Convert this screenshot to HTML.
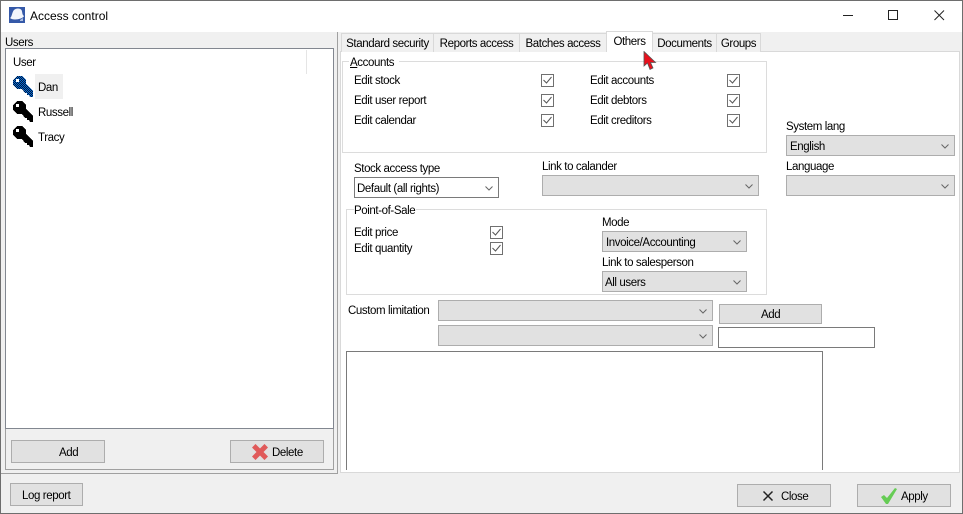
<!DOCTYPE html>
<html><head><meta charset="utf-8"><style>
html,body{margin:0;padding:0;width:963px;height:514px;overflow:hidden;background:#f0f0f0}
*{box-sizing:border-box}
#w{position:absolute;left:0;top:0;width:963px;height:514px;background:#f0f0f0;overflow:hidden;font-family:"Liberation Sans",sans-serif;font-size:11.5px;letter-spacing:-.4px;color:#000}
#w div,#w svg{position:absolute}
.t{line-height:14px;white-space:nowrap;height:14px;margin-top:1px}
.s{background:#e1e1e1;border:1px solid #adadad;height:21px}
.s.w{background:#fff;border-color:#7a7a7a}
.s span{position:absolute;left:2px;top:4px;line-height:14px;white-space:nowrap}
.s svg{right:5px;top:8px}
.b{background:#e1e1e1;border:1px solid #adadad;height:23px}
.c{width:13px;height:13px;background:#fff;border:1px solid #707070}
.c svg{left:0;top:0}
.tab{background:#f0f0f0;border:1px solid #d9d9d9;border-bottom:none;height:19px;top:33px;text-align:center;line-height:20px;white-space:nowrap}
.g{border:1px solid #dcdcdc}
</style></head><body><div id="w">
<div style="left:0;top:0;width:963px;height:32px;background:#fff"></div>
<svg style="left:9px;top:7px" width="16" height="16" viewBox="0 0 16 16"><rect width="16" height="16" fill="#3559a8"/><path d="M1 11C3 10 3 5 5 3C7 1 11 1 12.500 3C13.500 5 13 8 15 9C14 12 4 14 1 11Z" fill="#f2f5fb"/><path d="M11 13l3-2v3h-3z" fill="#aebfe0"/></svg>
<div class="t" style="left:30px;top:9px;font-size:12px;letter-spacing:0;margin-top:0">Access control</div>
<svg style="left:840px;top:5px" width="110" height="20" viewBox="0 0 110 20" shape-rendering="crispEdges"><rect x="3" y="10" width="10" height="1" fill="#222"/><rect x="48.500" y="5.500" width="9" height="9" fill="none" stroke="#222"/><path d="M94.500 5.500l9.500 9.500M104 5.500l-9.500 9.500" stroke="#222" shape-rendering="auto" fill="none"/></svg>

<div class="t" style="left:5px;top:35px">Users</div>
<div style="left:1px;top:32px;width:337px;height:442px;border-right:1px solid #a0a0a0;border-bottom:1px solid #a0a0a0"></div>
<div style="left:5px;top:48px;width:329px;height:381px;background:#fff;border:1px solid #828790"></div>
<div style="left:306px;top:50px;width:1px;height:24px;background:#e5e5e5"></div>
<div class="t" style="left:13px;top:55px">User</div>
<div style="left:35px;top:74px;width:28px;height:25px;background:#f0f0f0"></div>
<svg style="left:13px;top:76px" width="21" height="72" viewBox="0 0 21 72" shape-rendering="crispEdges">
<defs><pattern id="d" width="2" height="2" patternUnits="userSpaceOnUse"><rect width="2" height="2" fill="#0a6ad0"/><rect width="1" height="1" fill="#001a40"/><rect x="1" y="1" width="1" height="1" fill="#001a40"/></pattern>
<path id="k" fill-rule="evenodd" d="M4 0H9L13 4V8L20 15V21H17L16 19H14V17H12L9 13H4L0 9V4ZM3 3V6H6V3Z"/></defs>
<use href="#k" fill="url(#d)"/><use href="#k" y="25" fill="#000"/><use href="#k" y="50" fill="#000"/></svg>
<div class="t" style="left:38px;top:80px">Dan</div>
<div class="t" style="left:38px;top:105px">Russell</div>
<div class="t" style="left:38px;top:130px">Tracy</div>
<div style="left:5px;top:469px;width:329px;height:1px;background:#a0a0a0"></div>
<div style="left:333px;top:429px;width:1px;height:41px;background:#a0a0a0"></div>
<div style="left:5px;top:429px;width:1px;height:41px;background:#a0a0a0"></div>
<div class="b" style="left:11px;top:440px;width:94px"></div><div class="t" style="left:59px;top:445px">Add</div>
<div class="b" style="left:230px;top:440px;width:94px"></div>
<svg style="left:252px;top:444px" width="16" height="16" viewBox="0 0 16 16"><path d="M3.500 3.500L12.500 12.500M12.500 3.500L3.500 12.500" stroke="#e05a5a" stroke-width="5" stroke-linecap="square"/></svg>
<div class="t" style="left:272px;top:445px">Delete</div>

<div style="left:340px;top:51px;width:620px;height:422px;background:#fff;border:1px solid #d9d9d9"></div>
<div class="tab" style="left:341px;width:93px">Standard security</div>
<div class="tab" style="left:433px;width:87px">Reports access</div>
<div class="tab" style="left:519px;width:88px">Batches access</div>
<div class="tab" style="left:652px;width:65px">Documents</div>
<div class="tab" style="left:716px;width:45px">Groups</div>
<div class="tab" style="left:606px;top:31px;width:47px;height:21px;background:#fff;line-height:20px;z-index:2;border-color:#d9d9d9">Others</div>

<div class="g" style="left:342px;top:61px;width:425px;height:92px"></div>
<div class="t" style="left:349px;top:55px;background:#fff;padding:0 5px 0 1px"><span style="text-decoration:underline">A</span>ccounts</div>
<div class="t" style="left:354px;top:73px">Edit stock</div>
<div class="t" style="left:354px;top:93px">Edit user report</div>
<div class="t" style="left:354px;top:113px">Edit calendar</div>
<div class="t" style="left:590px;top:73px">Edit accounts</div>
<div class="t" style="left:590px;top:93px">Edit debtors</div>
<div class="t" style="left:590px;top:113px">Edit creditors</div>
<div class="c" style="left:541px;top:74px"><svg width="11" height="11"><path d="M1.500 5L4.500 8L9.500 2" stroke="#555" fill="none"/></svg></div>
<div class="c" style="left:541px;top:94px"><svg width="11" height="11"><path d="M1.500 5L4.500 8L9.500 2" stroke="#555" fill="none"/></svg></div>
<div class="c" style="left:541px;top:114px"><svg width="11" height="11"><path d="M1.500 5L4.500 8L9.500 2" stroke="#555" fill="none"/></svg></div>
<div class="c" style="left:727px;top:74px"><svg width="11" height="11"><path d="M1.500 5L4.500 8L9.500 2" stroke="#555" fill="none"/></svg></div>
<div class="c" style="left:727px;top:94px"><svg width="11" height="11"><path d="M1.500 5L4.500 8L9.500 2" stroke="#555" fill="none"/></svg></div>
<div class="c" style="left:727px;top:114px"><svg width="11" height="11"><path d="M1.500 5L4.500 8L9.500 2" stroke="#555" fill="none"/></svg></div>

<div class="t" style="left:354px;top:161px">Stock access type</div>
<div class="s w" style="left:354px;top:177px;width:145px"><span>Default (all rights)</span><svg width="8" height="5"><path d="M.5 .5L4 4L7.500 .5" stroke="#666" fill="none"/></svg></div>
<div class="t" style="left:542px;top:159px">Link to calander</div>
<div class="s" style="left:542px;top:175px;width:217px"><svg width="8" height="5"><path d="M.5 .5L4 4L7.500 .5" stroke="#666" fill="none"/></svg></div>
<div class="t" style="left:786px;top:119px">System lang</div>
<div class="s" style="left:786px;top:135px;width:169px"><span style="left:3px">English</span><svg width="8" height="5"><path d="M.5 .5L4 4L7.500 .5" stroke="#666" fill="none"/></svg></div>
<div class="t" style="left:786px;top:159px">Language</div>
<div class="s" style="left:786px;top:175px;width:169px"><svg width="8" height="5"><path d="M.5 .5L4 4L7.500 .5" stroke="#666" fill="none"/></svg></div>

<div class="g" style="left:346px;top:209px;width:421px;height:86px"></div>
<div class="t" style="left:354px;top:203px;background:#fff;padding-right:1px">Point-of-Sale</div>
<div class="t" style="left:354px;top:225px">Edit price</div>
<div class="t" style="left:354px;top:241px">Edit quantity</div>
<div class="c" style="left:490px;top:226px"><svg width="11" height="11"><path d="M1.500 5L4.500 8L9.500 2" stroke="#555" fill="none"/></svg></div>
<div class="c" style="left:490px;top:242px"><svg width="11" height="11"><path d="M1.500 5L4.500 8L9.500 2" stroke="#555" fill="none"/></svg></div>
<div class="t" style="left:602px;top:215px">Mode</div>
<div class="s" style="left:602px;top:231px;width:145px"><span style="left:3px">Invoice/Accounting</span><svg width="8" height="5"><path d="M.5 .5L4 4L7.500 .5" stroke="#666" fill="none"/></svg></div>
<div class="t" style="left:602px;top:255px">Link to salesperson</div>
<div class="s" style="left:602px;top:271px;width:145px"><span>All users</span><svg width="8" height="5"><path d="M.5 .5L4 4L7.500 .5" stroke="#666" fill="none"/></svg></div>

<div class="t" style="left:348px;top:303px">Custom limitation</div>
<div class="s" style="left:438px;top:300px;width:275px"><svg width="8" height="5"><path d="M.5 .5L4 4L7.500 .5" stroke="#666" fill="none"/></svg></div>
<div class="s" style="left:438px;top:325px;width:275px"><svg width="8" height="5"><path d="M.5 .5L4 4L7.500 .5" stroke="#666" fill="none"/></svg></div>
<div class="b" style="left:719px;top:304px;width:103px;height:20px"></div><div class="t" style="left:761px;top:307px">Add</div>
<div style="left:718px;top:327px;width:157px;height:21px;background:#fff;border:1px solid #7a7a7a"></div>
<div style="left:346px;top:351px;width:477px;height:125px;background:#fff;border:1px solid #7a7a7a;clip-path:inset(0 0 6px 0)"></div>

<div class="b" style="left:10px;top:483px;width:73px"></div><div class="t" style="left:22px;top:488px">Log report</div>
<div class="b" style="left:737px;top:484px;width:94px"></div>
<svg style="left:762px;top:490px" width="12" height="12" viewBox="0 0 12 12"><path d="M1.500 1.500L10.500 10.500M10.500 1.500L1.500 10.500" stroke="#222" stroke-width="1.500"/></svg>
<div class="t" style="left:781px;top:489px">Close</div>
<div class="b" style="left:857px;top:484px;width:94px"></div>
<svg style="left:880px;top:487px" width="18" height="18" viewBox="0 0 18 18"><path d="M1 10L4 8L7 11L15 1L17 2L8 17H6Z" fill="#66cc55"/></svg>
<div class="t" style="left:901px;top:489px">Apply</div>

<svg style="left:643px;top:51px;z-index:5" width="14" height="20" viewBox="0 0 14 20"><path d="M1 .5V15L4.500 12L7 18.500L10 17L7.500 11.500H12.500Z" fill="#e8101c" stroke="#555" stroke-width=".8"/></svg>

<div style="left:0;top:0;width:963px;height:514px;border:1px solid #6e6e6e"></div>
</div></body></html>
